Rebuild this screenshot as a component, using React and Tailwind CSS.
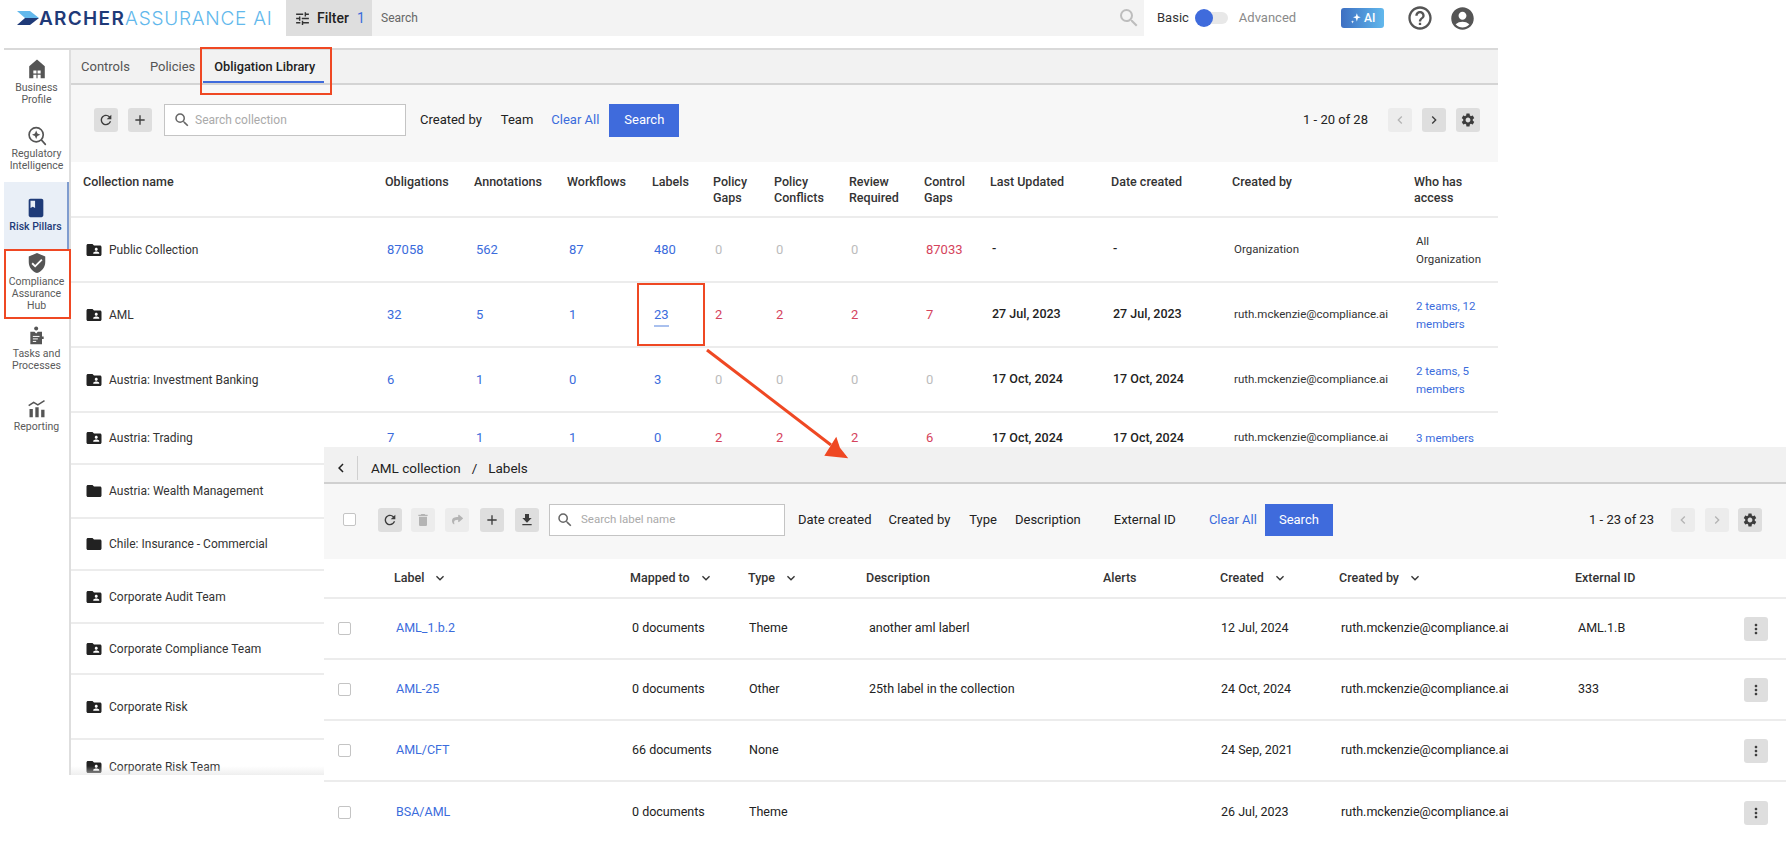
import React from "react";
import {
  MdAdd, MdBook, MdChevronLeft, MdChevronRight, MdDelete, MdFileDownload, MdFolder, MdFolderShared,
  MdHelpOutline, MdKeyboardArrowDown, MdMoreVert, MdRefresh, MdSearch, MdSettings, MdTune, MdVerifiedUser, MdAccountCircle,
} from "react-icons/md";
import { FaShare } from "react-icons/fa";

const font = "font-['Roboto','Liberation_Sans',sans-serif]";
const mainCols = "grid grid-cols-[302px_89px_93px_85px_61px_61px_75px_75px_66px_121px_121px_182px_72px] pl-3";
const subCols = "grid grid-cols-[70px_236px_118px_118px_237px_117px_119px_236px_169px_1fr]";

function IconBtn({ children, dim, w = "w-6" }) {
  return (
    <span className={`flex h-6 ${w} items-center justify-center rounded-[3px] ${dim ? "bg-[#ececec] text-[#b4b4b4]" : "bg-[#dedede] text-[#3c3c3c]"}`}>
      {children}
    </span>
  );
}

function Check() {
  return <span className="block h-[13px] w-[13px] rounded-[2px] border-[1.5px] border-[#c4c4c4] bg-white" />;
}

function HouseIcon() {
  return (
    <svg viewBox="0 0 24 24" className="h-[22px] w-[22px]" fill="#555">
      <path d="M12 1.5 3.5 9v13h17V9zM8 13.5h3.4V17H8zm4.6 0H16V17h-3.4zM8 18.2h3.4V22H8zm4.6 0H16V22h-3.4z" fillRule="evenodd" />
    </svg>
  );
}
function RegIcon() {
  return (
    <svg viewBox="0 0 24 24" className="h-[20px] w-[20px]" fill="none" stroke="#555" strokeWidth="2">
      <circle cx="11" cy="10.5" r="8.5" />
      <path d="m17.5 17 4.5 5" strokeLinecap="round" />
      <path d="M11 5.5 12.5 9 16 10.5 12.5 12 11 15.5 9.5 12 6 10.5 9.5 9z" fill="#555" stroke="none" />
    </svg>
  );
}
function TaskIcon() {
  return (
    <svg viewBox="0 0 24 24" className="h-[20px] w-[20px]" fill="#555">
      <circle cx="11" cy="3" r="2.4" />
      <path d="M4 7h5l2 2 2-2h5v5.5h2v3h-2V22H4z" />
      <path d="M7 12.5h8M7 15.5h6M7 18.5h4" stroke="#fff" strokeWidth="1.2" />
    </svg>
  );
}
function ReportIcon() {
  return (
    <svg viewBox="0 0 24 24" className="h-[20px] w-[20px]" fill="#555">
      <path d="M3 12h4v10H3zM10 10h4v12h-4zM17 13h4v9h-4z" />
      <path d="m2 8 6-4 5 3 8-5" fill="none" stroke="#555" strokeWidth="1.8" />
    </svg>
  );
}

function NavItem({ icon, label, h, active, pt }) {
  return (
    <div className={`flex flex-col items-center ${h} ${pt} ${active ? "border-r-2 border-[#7f9ccf] bg-[#e9eff7] text-[#1f3b78] font-medium" : "text-[#5a5a5a]"}`}>
      {icon}
      <div className="mt-[2px] whitespace-pre-line text-center text-[10.5px] leading-[12px]">{label}</div>
    </div>
  );
}

function Num({ v, c = "blue", u }) {
  const cls = c === "blue" ? "text-[#3b6cdc]" : c === "red" ? "text-[#d5435c]" : "text-[#bcbcbc]";
  return (
    <span className={`pl-[2px] text-[13px] ${cls}`}>
      <span className={u ? "border-b-2 border-[#a9c0ee] pb-[3px]" : ""}>{v}</span>
    </span>
  );
}

const rows = [
  { n: "Public Collection", h: "h-[65px]", v: ["87058", "562", "87", "480"], g: ["0", "0", "0"], gc: "gray", cg: "87033", cgc: "red", lu: "-", dc: "-", by: "Organization", who: "All\nOrganization", whoc: "text-[#333]" },
  { n: "AML", h: "h-[65px]", v: ["32", "5", "1", "23"], g: ["2", "2", "2"], gc: "red", cg: "7", cgc: "red", lu: "27 Jul, 2023", dc: "27 Jul, 2023", by: "ruth.mckenzie@compliance.ai", who: "2 teams, 12\nmembers", u: true },
  { n: "Austria: Investment Banking", h: "h-[65px]", v: ["6", "1", "0", "3"], g: ["0", "0", "0"], gc: "gray", cg: "0", cgc: "gray", lu: "17 Oct, 2024", dc: "17 Oct, 2024", by: "ruth.mckenzie@compliance.ai", who: "2 teams, 5\nmembers" },
  { n: "Austria: Trading", h: "h-[52px]", v: ["7", "1", "1", "0"], g: ["2", "2", "2"], gc: "red", cg: "6", cgc: "red", lu: "17 Oct, 2024", dc: "17 Oct, 2024", by: "ruth.mckenzie@compliance.ai", who: "3 members" },
];

const more = [
  ["Austria: Wealth Management", "h-[54px]", true],
  ["Chile: Insurance - Commercial", "h-[52px]", true],
  ["Corporate Audit Team", "h-[53px]"],
  ["Corporate Compliance Team", "h-[51px]"],
  ["Corporate Risk", "h-[65px]"],
  ["Corporate Risk Team", "h-[55px] border-b-0"],
];

function Name({ n, plain }) {
  return (
    <div className="flex items-center gap-[6px] pl-[2px]">
      {plain ? <MdFolder className="h-[18px] w-[18px] text-[#222]" /> : <MdFolderShared className="h-[18px] w-[18px] text-[#222]" />}
      <span className="text-[12px] text-[#333]">{n}</span>
    </div>
  );
}

const subRows = [
  ["AML_1.b.2", "0 documents", "Theme", "another aml laberl", "12 Jul, 2024", "AML.1.B"],
  ["AML-25", "0 documents", "Other", "25th label in the collection", "24 Oct, 2024", "333"],
  ["AML/CFT", "66 documents", "None", "", "24 Sep, 2021", ""],
  ["BSA/AML", "0 documents", "Theme", "", "26 Jul, 2023", ""],
];

function SubHead({ t, arrow }) {
  return (
    <span className="flex items-center gap-[8px]">
      {t}
      {arrow && <MdKeyboardArrowDown className="h-4 w-4 text-[#333]" />}
    </span>
  );
}

export default function App() {
  return (
    <div className={`relative h-[846px] w-[1786px] overflow-hidden bg-white ${font}`}>
      {/* top bar */}
      <header className="flex h-[48px] w-[1502px]">
        <div className="flex h-[36px] w-[286px] items-center pl-[17px]">
          <svg viewBox="0 0 22 14" className="h-[14px] w-[22px] shrink-0">
            <path d="M0 0h13l9 7H8z" fill="#62b8ec" />
            <path d="M8 7h14l-9 7H0z" fill="#1f3a78" />
          </svg>
          <span className="font-['Inter',sans-serif] text-[19px] font-semibold leading-none tracking-[1.3px] text-[#1f3a78]">ARCHER</span>
          <span className="font-['Inter',sans-serif] text-[19px] font-light leading-none tracking-[0.75px] text-[#62b8ec]">ASSURANCE AI</span>
        </div>
        <div className="flex h-[36px] w-[86px] items-center bg-[#dedede] pl-[8px]">
          <MdTune className="h-[17px] w-[17px] text-[#333]" />
          <span className="ml-[6px] text-[14px] font-medium text-[#222]">Filter</span>
          <span className="ml-[8px] text-[14px] text-[#3b6cdc]">1</span>
        </div>
        <div className="flex h-[36px] w-[772px] items-center justify-between bg-[#f3f3f3] pl-[9px] pr-[3px]">
          <span className="text-[12px] text-[#666]">Search</span>
          <MdSearch className="h-[24px] w-[24px] text-[#bdbdbd]" />
        </div>
        <div className="flex h-[36px] items-center pl-[13px]">
          <span className="text-[13px] text-[#333]">Basic</span>
          <span className="relative ml-[6px] h-[12px] w-[33px]">
            <span className="absolute left-[9px] top-0 h-[12px] w-[24px] rounded-full bg-[#e8e8e8]" />
            <span className="absolute left-0 top-[-3px] h-[18px] w-[18px] rounded-full bg-[#3f6bdc]" />
          </span>
          <span className="ml-[11px] text-[13px] text-[#8a8a8a]">Advanced</span>
          <span className="ml-[45px] flex h-[20px] w-[43px] items-center justify-center rounded-[3px] bg-gradient-to-r from-[#3d6fc2] to-[#62b8ec] text-[12px] font-medium text-white">
            <svg viewBox="0 0 14 14" className="mr-[2px] h-[12px] w-[12px]" fill="#fff">
              <path d="M8 1.5 9.2 5 12.5 6.2 9.2 7.4 8 11 6.8 7.4 3.5 6.2 6.8 5z" />
              <path d="M3 9.5 3.5 11 5 11.5 3.5 12 3 13.5 2.5 12 1 11.5 2.5 11z" />
            </svg>
            AI
          </span>
          <MdHelpOutline className="ml-[22px] h-[28px] w-[28px] text-[#555]" />
          <MdAccountCircle className="ml-[15px] h-[27px] w-[27px] text-[#555]" />
        </div>
      </header>

      {/* page body */}
      <div className="ml-[4px] flex h-[727px] w-[1494px] overflow-hidden border-t-2 border-[#d9d9d9]">
        <aside className="flex w-[67px] shrink-0 flex-col border-r-2 border-[#dedede]">
          <NavItem h="h-[66px]" pt="pt-[8px]" icon={<HouseIcon />} label={"Business\nProfile"} />
          <NavItem h="h-[66px]" pt="pt-[10px]" icon={<RegIcon />} label={"Regulatory\nIntelligence"} />
          <NavItem h="h-[67px]" pt="pt-[15px]" active icon={<MdBook className="h-[22px] w-[22px] text-[#1f3b78]" />} label="Risk Pillars" />
          <NavItem h="h-[70px]" pt="pt-[3px]" icon={<MdVerifiedUser className="h-[22px] w-[22px] text-[#555]" />} label={"Compliance\nAssurance\nHub"} />
          <NavItem h="h-[69px]" pt="pt-[7px]" icon={<TaskIcon />} label={"Tasks and\nProcesses"} />
          <NavItem h="h-[60px]" pt="pt-[11px]" icon={<ReportIcon />} label="Reporting" />
        </aside>

        <main className="relative min-w-0 flex-1 overflow-hidden">
          <nav className="flex h-[35px] items-center gap-[20px] border-b-2 border-[#d4d4d4] bg-[#f2f2f2] pl-[10px] text-[13px]">
            <span className="text-[#555]">Controls</span>
            <span className="text-[#555]">Policies</span>
            <span className="relative ml-[-1px] text-[12.75px] font-medium text-[#222]">
              Obligation Library
              <span className="absolute bottom-[-7px] left-[-11px] right-[-9px] h-[2px] bg-[#3f6bdc]" />
            </span>
          </nav>
          <div className="flex h-[77px] items-center bg-[#f7f7f7] pb-[7px] pl-[23px] pr-[18px] text-[13px] text-[#222]">
            <IconBtn><MdRefresh className="h-4 w-4" /></IconBtn>
            <span className="ml-[10px]"><IconBtn><MdAdd className="h-4 w-4" /></IconBtn></span>
            <div className="ml-[12px] flex h-[32px] w-[242px] items-center border border-[#c4c4c4] bg-white pl-[8px]">
              <MdSearch className="h-[18px] w-[18px] text-[#666]" />
              <span className="ml-[4px] text-[12px] text-[#aaa]">Search collection</span>
            </div>
            <span className="ml-[14px]">Created by</span>
            <span className="ml-[19px]">Team</span>
            <span className="ml-[18px] text-[#3b6cdc]">Clear All</span>
            <span className="ml-[10px] flex h-[33px] w-[70px] items-center justify-center bg-[#3f6bdc] text-white">Search</span>
            <span className="ml-auto">1 - 20 of 28</span>
            <span className="ml-[20px]"><IconBtn dim><MdChevronLeft className="h-4 w-4" /></IconBtn></span>
            <span className="ml-[10px]"><IconBtn><MdChevronRight className="h-4 w-4" /></IconBtn></span>
            <span className="ml-[10px]"><IconBtn><MdSettings className="h-4 w-4" /></IconBtn></span>
          </div>

          <div className={`${mainCols} h-[56px] border-b-2 border-[#ececec] pt-[12px] text-[12.5px] font-medium leading-[16px] text-[#333]`}>
            <span>Collection name</span>
            <span>Obligations</span>
            <span>Annotations</span>
            <span>Workflows</span>
            <span>Labels</span>
            <span className="whitespace-pre-line">{"Policy\nGaps"}</span>
            <span className="whitespace-pre-line">{"Policy\nConflicts"}</span>
            <span className="whitespace-pre-line">{"Review\nRequired"}</span>
            <span className="whitespace-pre-line">{"Control\nGaps"}</span>
            <span>Last Updated</span>
            <span>Date created</span>
            <span>Created by</span>
            <span className="whitespace-pre-line">{"Who has\naccess"}</span>
          </div>

          {rows.map((r) => (
            <div key={r.n} className={`${mainCols} ${r.h} items-center border-b-2 border-[#ececec]`}>
              <Name n={r.n} />
              <Num v={r.v[0]} />
              <Num v={r.v[1]} />
              <Num v={r.v[2]} />
              <Num v={r.v[3]} u={r.u} />
              <Num v={r.g[0]} c={r.gc} />
              <Num v={r.g[1]} c={r.gc} />
              <Num v={r.g[2]} c={r.gc} />
              <Num v={r.cg} c={r.cgc} />
              <span className="pl-[2px] text-[12.5px] font-medium text-[#222]">{r.lu}</span>
              <span className="pl-[2px] text-[12.5px] font-medium text-[#222]">{r.dc}</span>
              <span className="pl-[2px] text-[11.5px] text-[#333]">{r.by}</span>
              <span className={`whitespace-pre-line pl-[2px] text-[11.5px] leading-[18px] ${r.whoc || "text-[#3b6cdc]"}`}>{r.who}</span>
            </div>
          ))}
          {more.map(([n, h, plain]) => (
            <div key={n} className={`flex items-center border-b-2 border-[#ececec] pl-3 ${h}`}>
              <Name n={n} plain={plain} />
            </div>
          ))}
          <div className="absolute bottom-0 left-0 right-0 h-[9px] bg-gradient-to-b from-transparent to-[#e4e4e4]/60" />
        </main>
      </div>

      {/* overlaid labels panel */}
      <section className="absolute left-[324px] top-[447px] h-[399px] w-[1462px] bg-white">
        <div className="flex h-[37px] items-center border-b-2 border-[#d0d0d0] bg-[#f1f1f1] pt-[7px] text-[13.5px] text-[#222]">
          <span className="flex h-[24px] w-[34px] items-center justify-center border-r border-[#d0d0d0]">
            <MdChevronLeft className="h-[18px] w-[18px]" />
          </span>
          <span className="ml-[13px]">AML collection</span>
          <span className="ml-[11px]">/</span>
          <span className="ml-[11px]">Labels</span>
        </div>
        <div className="flex h-[75px] items-center bg-[#f7f7f7] pb-[4px] pl-[19px] pr-[24px] text-[13px] text-[#222]">
          <Check />
          <span className="ml-[22px]"><IconBtn><MdRefresh className="h-4 w-4" /></IconBtn></span>
          <span className="ml-[9px]"><IconBtn dim><MdDelete className="h-4 w-4" /></IconBtn></span>
          <span className="ml-[10px]"><IconBtn dim><FaShare className="h-[11px] w-[11px]" /></IconBtn></span>
          <span className="ml-[11px]"><IconBtn><MdAdd className="h-4 w-4" /></IconBtn></span>
          <span className="ml-[11px]"><IconBtn><MdFileDownload className="h-4 w-4" /></IconBtn></span>
          <div className="ml-[10px] flex h-[32px] w-[236px] items-center border border-[#c4c4c4] bg-white pl-[6px]">
            <MdSearch className="h-[18px] w-[18px] text-[#666]" />
            <span className="ml-[7px] text-[11.5px] text-[#aaa]">Search label name</span>
          </div>
          <span className="ml-[13px]">Date created</span>
          <span className="ml-[17px]">Created by</span>
          <span className="ml-[19px]">Type</span>
          <span className="ml-[18px]">Description</span>
          <span className="ml-[33px]">External ID</span>
          <span className="ml-[33px] text-[#3b6cdc]">Clear All</span>
          <span className="ml-[8px] flex h-[32px] w-[68px] items-center justify-center bg-[#3f6bdc] text-white">Search</span>
          <span className="ml-auto">1 - 23 of 23</span>
          <span className="ml-[17px]"><IconBtn dim><MdChevronLeft className="h-4 w-4" /></IconBtn></span>
          <span className="ml-[10px]"><IconBtn dim><MdChevronRight className="h-4 w-4" /></IconBtn></span>
          <span className="ml-[9px]"><IconBtn><MdSettings className="h-4 w-4" /></IconBtn></span>
        </div>
        <div className={`${subCols} h-[40px] items-center border-b-2 border-[#ececec] text-[12.5px] font-medium text-[#333]`}>
          <span />
          <SubHead t="Label" arrow />
          <SubHead t="Mapped to" arrow />
          <SubHead t="Type" arrow />
          <SubHead t="Description" />
          <SubHead t="Alerts" />
          <SubHead t="Created" arrow />
          <SubHead t="Created by" arrow />
          <SubHead t="External ID" />
          <span />
        </div>
        {subRows.map((r) => (
          <div key={r[0]} className={`${subCols} h-[61px] items-center border-b-2 border-[#ececec] text-[12.5px] text-[#222] last:border-b-0`}>
            <span className="pl-[14px]"><Check /></span>
            <span className="pl-[2px] text-[#3b6cdc]">{r[0]}</span>
            <span className="pl-[2px]">{r[1]}</span>
            <span className="pl-[1px]">{r[2]}</span>
            <span className="pl-[3px]">{r[3]}</span>
            <span />
            <span className="pl-[1px]">{r[4]}</span>
            <span className="pl-[2px]">ruth.mckenzie@compliance.ai</span>
            <span className="pl-[3px]">{r[5]}</span>
            <span>
              <IconBtn><MdMoreVert className="h-4 w-4" /></IconBtn>
            </span>
          </div>
        ))}
      </section>

      {/* annotations */}
      <span className="absolute left-[200px] top-[47px] h-[48px] w-[132px] border-2 border-[#ef4823]" />
      <span className="absolute left-[4px] top-[249px] h-[70px] w-[67px] border-2 border-[#ef4823]" />
      <span className="absolute left-[637px] top-[283px] h-[63px] w-[68px] border-2 border-[#ef4823]" />
      <svg className="absolute left-[700px] top-[345px]" width="160" height="120" viewBox="0 0 160 120">
        <path d="M7 5 131 100" stroke="#ef4823" strokeWidth="3" fill="none" />
        <path d="M139 103 146 112 126 110 136 94z" fill="#ef4823" stroke="#ef4823" strokeWidth="2" />
      </svg>
    </div>
  );
}
